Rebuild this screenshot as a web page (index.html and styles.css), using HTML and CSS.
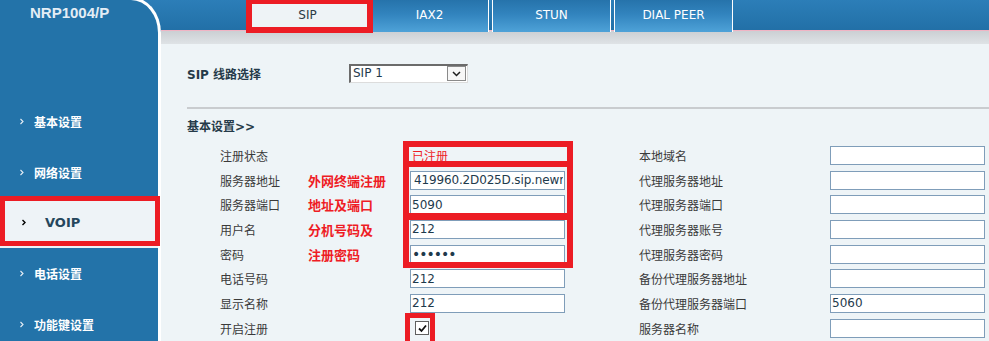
FILE: index.html
```html
<!DOCTYPE html>
<html lang="zh-CN">
<head>
<meta charset="utf-8">
<title>NRP1004/P - VOIP</title>
<link rel="stylesheet" href="styles.css">
</head>
<body>
<div class="page">
  <aside class="sidebar">
    <div class="brand">NRP1004/P</div>
    <nav class="nav">
      <a class="nav-item"><svg class="chev" width="4" height="7" viewBox="0 0 4 7"><polyline points="0.5,1 3,3.5 0.5,6"/></svg><span>基本设置</span></a>
      <a class="nav-item"><svg class="chev" width="4" height="7" viewBox="0 0 4 7"><polyline points="0.5,1 3,3.5 0.5,6"/></svg><span>网络设置</span></a>
      <a class="nav-item active"><svg class="chev" width="4" height="7" viewBox="0 0 4 7"><polyline points="0.5,1 3,3.5 0.5,6"/></svg><span>VOIP</span></a>
      <a class="nav-item"><svg class="chev" width="4" height="7" viewBox="0 0 4 7"><polyline points="0.5,1 3,3.5 0.5,6"/></svg><span>电话设置</span></a>
      <a class="nav-item"><svg class="chev" width="4" height="7" viewBox="0 0 4 7"><polyline points="0.5,1 3,3.5 0.5,6"/></svg><span>功能键设置</span></a>
    </nav>
  </aside>

  <main class="main">
    <header class="topbar">
      <div class="tabs">
        <div class="tab active">SIP</div>
        <div class="tab">IAX2</div>
        <div class="tab">STUN</div>
        <div class="tab">DIAL PEER</div>
      </div>
    </header>

    <section class="content">
      <div class="line-select">
        <span class="line-label">SIP 线路选择</span>
        <div class="select">
          <span class="select-value">SIP 1</span>
          <span class="select-btn"><svg width="11" height="8" viewBox="0 0 11 8"><polyline points="2,2 5.5,5.5 9,2"/></svg></span>
        </div>
      </div>
      <div class="divider"></div>
      <div class="section-title">基本设置&gt;&gt;</div>

      <div class="form-grid">
        <span class="label">注册状态</span><span class="note"></span><span class="field status">已注册</span>
        <span class="label right">本地域名</span><input class="input" type="text" value="">

        <span class="label">服务器地址</span><span class="note">外网终端注册</span><input class="input server" type="text" value="419960.2D025D.sip.newrocktech.com">
        <span class="label right">代理服务器地址</span><input class="input" type="text" value="">

        <span class="label">服务器端口</span><span class="note">地址及端口</span><input class="input" type="text" value="5090">
        <span class="label right">代理服务器端口</span><input class="input" type="text" value="">

        <span class="label">用户名</span><span class="note">分机号码及</span><input class="input" type="text" value="212">
        <span class="label right">代理服务器账号</span><input class="input" type="text" value="">

        <span class="label">密码</span><span class="note">注册密码</span><input class="input password" type="password" value="aaaaaa">
        <span class="label right">代理服务器密码</span><input class="input" type="text" value="">

        <span class="label">电话号码</span><span class="note"></span><input class="input" type="text" value="212">
        <span class="label right">备份代理服务器地址</span><input class="input" type="text" value="">

        <span class="label">显示名称</span><span class="note"></span><input class="input" type="text" value="212">
        <span class="label right">备份代理服务器端口</span><input class="input" type="text" value="5060">

        <span class="label">开启注册</span><span class="note"></span><span class="field"><span class="checkbox"><svg width="11" height="11" viewBox="0 0 11 11"><polyline points="2,5.5 4.5,8 9,2.5"/></svg></span></span>
        <span class="label right">服务器名称</span><input class="input" type="text" value="">
      </div>
    </section>
  </main>

  <div class="mark mark-tab"></div>
  <div class="mark mark-nav"></div>
  <div class="mark mark-status"></div>
  <div class="mark mark-server"></div>
  <div class="mark mark-user"></div>
  <div class="mark mark-check"></div>
</div>
</body>
</html>
```

FILE: styles.css
```css
* { box-sizing: border-box; }

html, body {
  margin: 0;
  padding: 0;
}

body {
  font-family: "DejaVu Sans", "Noto Sans CJK SC", sans-serif;
  font-size: 12px;
  color: #333;
}

.page {
  position: relative;
  width: 989px;
  height: 341px;
  overflow: hidden;
  display: flex;
  background: linear-gradient(to bottom, #2c7eb8 0, #2270a7 30px, #2270a7 100%);
}

/* ---------- sidebar ---------- */
.sidebar {
  flex: 0 0 161px;
  width: 161px;
  height: 344px;
  margin-top: -3px;
  background: #2373a9;
  border-top: 3px solid #fff;
  border-right: 3px solid #fff;
  border-top-right-radius: 30px 36px;
}

.brand {
  height: 96px;
  padding: 4px 0 0 30px;
  font-family: "Liberation Sans", Arial, sans-serif;
  font-weight: bold;
  font-size: 15px;
  line-height: 17px;
  color: #e3edf5;
}

.nav {
  display: flex;
  flex-direction: column;
}

.nav-item {
  height: 50.7px;
  display: flex;
  align-items: center;
  gap: 10px;
  padding-left: 20px;
  font-weight: bold;
  font-size: 12px;
  color: #fff;
}

.nav-item .chev {
  flex: 0 0 4px;
  fill: none;
  stroke: #e6eef5;
  stroke-width: 1.1;
}

.nav-item.active {
  background: #eef3f7;
  color: #25465c;
  padding-left: 22px;
  gap: 19px;
  font-size: 13px;
}

.nav-item.active .chev {
  stroke: #000;
  stroke-width: 1.4;
}

/* ---------- main ---------- */
.main {
  flex: 1;
  display: flex;
  flex-direction: column;
  min-width: 0;
}

.topbar {
  height: 44px;
  flex: 0 0 44px;
  background: linear-gradient(to bottom,
    #2c7eb8 0, #2270a7 30px,
    #f0b4c4 30px, #f0b4c4 31px,
    #cbcfd3 31px, #dfe3e6 44px);
}

.tabs {
  display: flex;
  gap: 3px;
  margin-left: 87px;
}

.tab {
  width: 119px;
  height: 32px;
  line-height: 30px;
  text-align: center;
  color: #fff;
  font-size: 12px;
  border-left: 1px solid #fff;
  border-right: 1px solid #fff;
  background: linear-gradient(to bottom, #2673ab 0, #3284be 45%, #4ea2d8 100%);
}

.tab.active {
  background: #eef3f6;
  color: #2b3a45;
  border-color: #eef3f6;
}

/* ---------- content ---------- */
.content {
  flex: 1;
  background: #eef4f7;
  padding: 19px 0 0 26px;
}

.line-select {
  display: flex;
  align-items: center;
  height: 20px;
}

.line-label {
  width: 162px;
  font-weight: bold;
  color: #253a49;
}

.select {
  width: 119px;
  height: 19px;
  display: flex;
  align-items: center;
  justify-content: space-between;
  background: #fff;
  border-top: 2px solid #6b6b6b;
  border-left: 2px solid #6b6b6b;
  border-right: 1px solid #dcdcdc;
  border-bottom: 1px solid #dcdcdc;
  color: #1f3a4d;
}

.select-value {
  padding-left: 2px;
  line-height: 15px;
}

.select-btn {
  width: 19px;
  height: 15px;
  margin-right: 1px;
  border: 1px solid #8a8a8a;
  background: #f7f7f7;
  display: flex;
  align-items: center;
  justify-content: center;
}

.select-btn svg {
  fill: none;
  stroke: #1e1e1e;
  stroke-width: 1.5;
}

.divider {
  margin-top: 24px;
  height: 2px;
  background: #c9cccf;
}

.section-title {
  margin-top: 10px;
  line-height: 16px;
  font-weight: bold;
  color: #253a49;
}

.form-grid {
  margin-top: 8px;
  padding-left: 33px;
  display: grid;
  grid-template-columns: 88px 102px 155px 265px 155px;
  grid-auto-rows: 24.7px;
  align-items: center;
}

.label {
  color: #3a3a3a;
  white-space: nowrap;
}

.label.right {
  padding-left: 74px;
}

.note {
  color: #ee1c25;
  font-weight: bold;
  font-size: 13px;
  white-space: nowrap;
}

.field.status {
  color: #ee1c25;
  padding-left: 2px;
}

.input {
  width: 155px;
  height: 19px;
  margin: 0;
  padding: 0 1px;
  border: 1px solid #7f9db9;
  border-radius: 0;
  background: #fff;
  font-family: "DejaVu Sans", sans-serif;
  font-size: 12px;
  color: #1e3a4c;
  outline: none;
}

.input.server {
  padding-left: 3px;
  letter-spacing: -0.15px;
}

.input.password {
  font-size: 14px;
  letter-spacing: -1px;
  color: #1e3a4c;
}

.checkbox {
  margin-left: 5px;
  width: 14px;
  height: 14px;
  display: flex;
  align-items: center;
  justify-content: center;
  border: 1px solid #5f5f5f;
  background: #fff;
}

.checkbox svg {
  fill: none;
  stroke: #111;
  stroke-width: 1.8;
}

/* ---------- red annotation marks ---------- */
.mark {
  position: absolute;
  border-style: solid;
  border-color: #ec1c24;
  pointer-events: none;
}

.mark-tab    { left: 246px; top: -2px;  width: 127px; height: 35px; border-width: 6px; }
.mark-nav    { left: 0;     top: 196px; width: 160px; height: 50px; border-width: 5px; }
.mark-status { left: 403px; top: 141px; width: 170px; height: 26px; border-width: 6px; }
.mark-server { left: 403px; top: 161px; width: 170px; height: 58px; border-width: 6px; }
.mark-user   { left: 403px; top: 214px; width: 170px; height: 54px; border-width: 6px; }
.mark-check  { left: 405px; top: 313px; width: 30px;  height: 34px; border-width: 5px; }
```
